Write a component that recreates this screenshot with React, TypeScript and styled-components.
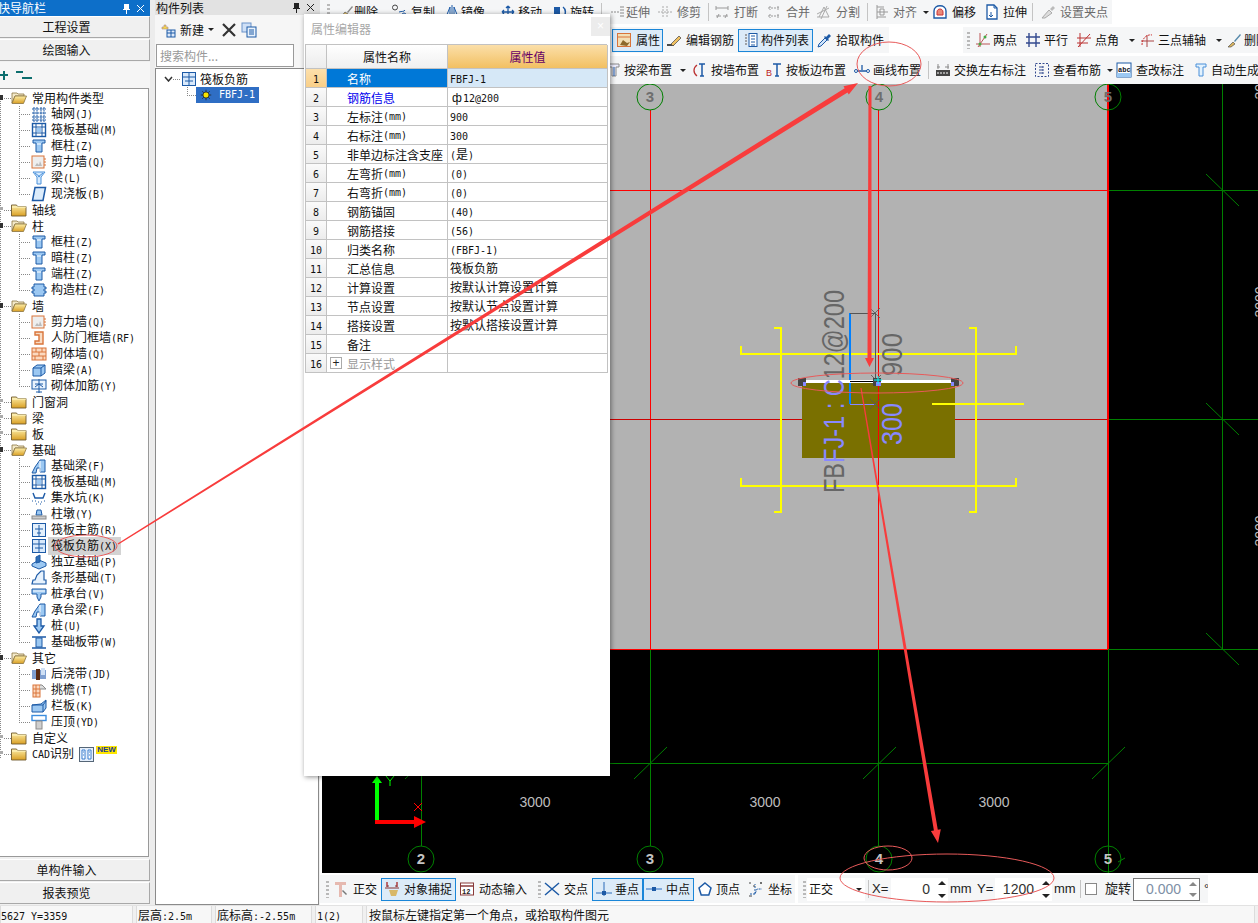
import React from "react";
import styled, { createGlobalStyle } from "styled-components";

const Global = createGlobalStyle`
  html, body { margin: 0; padding: 0; background: #f0f0f0; }
  body { font-family: "Noto Sans CJK SC", "Liberation Sans", sans-serif; font-size: 12px; line-height: 16px; color: #111; }
  * { box-sizing: border-box; }
`;

const Root = styled.div`position: relative; width: 1258px; height: 923px; overflow: hidden; display: flex; flex-direction: column; background: #f0f0f0;`;
const Workspace = styled.div`display: flex; height: 905px; flex: none;`;

/* --- shared text --- */
const Lat = styled.span`font-family: "DejaVu Sans Mono", "Liberation Mono", monospace; font-size: 10px; letter-spacing: 0;`;
const Txt = ({ s }: { s: string }) => (
  <>
    {s.split(/([\x21-\x7e ]+)/).map((p, i) => (p === "" ? null : /^[\x21-\x7e ]+$/.test(p) ? <Lat key={i}>{p}</Lat> : <span key={i}>{p}</span>))}
  </>
);

/* --- icons --- */
const Svg = styled.svg`width: 16px; height: 16px; flex: none; display: block;`;
const SmallSvg = styled(Svg)`width: 12px; height: 12px;`;
const B = "#1d5aa6", L = "#9cc8f2", O = "#d9743a", G = "#8a8a8a", D = "#444";
const col = <><path d="M2 2h12v3H11v9H5V5H2z" fill={L} stroke={B} /><path d="M6 6h4" stroke="#fff" /></>;
const fbeam = <><path d="M1 15l3-6 5-7h5v12H9v-4H6l-1 5z" fill={L} stroke={B} /><path d="M9 3v11" stroke="#fff" /></>;
const raft = <><rect x="1.5" y="1.5" width="13" height="13" fill="#fff" stroke={B} strokeWidth="1.4" /><path d="M1 5h14M1 11h14M5 1v14M11 1v14" stroke={B} /><rect x="6" y="6" width="4" height="4" fill={L} /></>;
const wall = <><rect x="1" y="2" width="12" height="12" fill="#eee" stroke={O} /><path d="M4 12l2-3 2 2 1-4 2 5z" fill="#bbb" /><path d="M13 5h2M13 8h2M13 11h2" stroke={O} /></>;
const icons = {
  grid: <path d="M1 3h14M1 7h14M1 11h14M1 14h14M3 1v15M6 1v15M10 1v15M13 1v15" stroke={B} strokeDasharray="2 .6" fill="none" />,
  raft, col, wall,
  beam: <><path d="M2 2h12l-4 5v7H6V7z" fill="#d6ebff" stroke="#4a90d9" /><path d="M4 3l5 4M12 3L7 7" stroke="#4a90d9" /></>,
  slab: <path d="M4 1.5h10.5L12 14.5H1.5z" fill="#dcecfb" stroke={B} strokeWidth="1.5" />,
  gz: <path d="M3 2h10v3h2v2h-2v2h2v2h-2v3H3v-3H1V9h2V7H1V5h2z" fill={L} stroke={B} />,
  rf: <path d="M4 2h8v12H4v-3h4V5H4z" fill="#f8dcc4" stroke={O} strokeWidth="1.4" />,
  brick: <><rect x="1" y="2" width="14" height="12" fill="#fbd9bf" stroke={O} /><path d="M1 6h14M1 10h14M5 2v4M11 2v4M8 6v4M4 10v4M12 10v4" stroke={O} /></>,
  lintel: <><path d="M2 6l4-3h8v8l-4 3H2z" fill={L} stroke={B} /><path d="M2 6h8v8M10 6l4-3" stroke={B} fill="none" /></>,
  wrebar: <><rect x="1" y="2" width="14" height="9" fill="#eaf3fd" stroke={B} /><path d="M8 1v14M4 6h8M4 9l4-3 4 3M5 14h6" stroke={B} fill="none" /></>,
  fbeam,
  sump: <><path d="M2 3l2 5h8l2-5" fill="none" stroke={B} strokeWidth="1.4" /><path d="M1 11h1M4 11h1M7 12h1M10 12h1M13 11h1M5 14h1M9 14h1" stroke={B} /></>,
  pier: <><path d="M6 4h4l1 5H5z" fill={L} stroke={B} /><rect x="1" y="10" width="14" height="3" fill="#ccc" stroke={G} /></>,
  fmain: <><rect x="1.5" y="1.5" width="13" height="13" fill="#e3f0fc" stroke={B} /><path d="M8 3v11M4 7h8M6 11h4" stroke={B} fill="none" /></>,
  fneg: <><rect x="1.5" y="1.5" width="13" height="13" fill="#d9e9fb" stroke={B} /><path d="M1.5 6h13M8 2v12M4 10h8" stroke={B} fill="none" /></>,
  iso: <><path d="M1 10l7-4 7 3v3l-7 3-7-3z" fill={L} stroke={B} /><path d="M5 3l4-2v7l-4 1z" fill="#2d6cb4" stroke={B} /></>,
  strip: <><path d="M1 14l1-4h2l2-5 4-4h3v9h2v4z" fill="#e7f2fd" stroke={B} strokeWidth="1.2" /></>,
  cap: <><path d="M1 3h14v5H10v3l-2 4-2-4V8H1z" fill={L} stroke={B} /><path d="M2 5h12" stroke="#fff" /></>,
  pile: <><path d="M6 1h4v7h3l-5 7-5-7h3z" fill={L} stroke={B} strokeWidth="1.3" /></>,
  band: <><path d="M1 3h14M1 14h14" stroke={B} strokeWidth="1.4" /><rect x="5" y="4" width="6" height="9" fill={L} stroke={B} /></>,
  post: <><rect x="1" y="4" width="14" height="9" fill="#7f9fd0" /><rect x="5" y="3" width="4" height="11" fill="#5a2b14" /><rect x="10" y="2" width="4" height="7" fill="#cfe0f5" /></>,
  eaves: <><rect x="2" y="3" width="7" height="12" fill="#fbd9bf" stroke={O} /><path d="M2 7h7M2 11h7M5 3v12" stroke={O} /><path d="M9 3h2l4 4H9" fill="#ddd" stroke={G} /></>,
  parapet: <><path d="M1 7l9-1 5-4v8l-3 4H1z" fill={L} stroke={B} /><path d="M1 7h11v7M12 7l3-4" stroke={B} fill="none" /></>,
  cope: <><rect x="1" y="1.5" width="14" height="5" fill="#fff" stroke="#3c8dde" strokeWidth="1.4" /><rect x="5" y="7" width="6" height="8" fill="#cfcfcf" stroke={G} /></>,
  del: <><path d="M9 8l5-6 1 1-5 6z" fill="#888" /><path d="M2 14l5-6 3 2-2 3z" fill="#e3c16f" stroke={D} strokeWidth=".6" /></>,
  copy: <><circle cx="4" cy="3.5" r="2.5" fill="none" stroke={D} /><circle cx="13" cy="11" r="2" fill="none" stroke={B} /><path d="M8 8c3-1 5 0 6-2M3 11h5" stroke={B} fill="none" /></>,
  mirror: <path d="M8 1v14M6 3L2 13h4zM10 3l4 10h-4z" stroke={B} fill="#dcecfb" />,
  move: <path d="M8 2v12M2 8h12M8 2L6 4M8 2l2 2M8 14l-2-2M8 14l2-2M2 8l2-2M2 8l2 2M14 8l-2-2M14 8l-2 2" stroke={B} strokeWidth="1.3" fill="none" />,
  rotate: <><rect x="2" y="3" width="6" height="9" fill={B} /><path d="M11 3c3 2 3 7 1 10" stroke={B} strokeWidth="1.5" fill="none" /><path d="M10 12l3 2 1-3" fill={B} /></>,
  extend: <path d="M2 8h8M12 2v12M14 2v12" stroke={G} strokeDasharray="2 1" fill="none" />,
  trim: <path d="M1 8h14M6 2v12M10 2v12" stroke="#aaa" strokeDasharray="2 1" fill="none" />,
  brk: <path d="M2 4h12M2 12h5M9 12h5M2 2v4M14 2v4M3 14l2-4M11 14l2-4" stroke="#999" fill="none" />,
  merge: <path d="M2 4h12M2 12h12M4 2v4M12 2v4M4 10v4M12 10v4" stroke="#999" strokeDasharray="2 1" fill="none" />,
  split: <path d="M2 13h12L9 3 4 13M2 10l12-6M6 15l6-13" stroke="#aaa" fill="none" />,
  align: <path d="M3 1v14M3 3h7M3 8h11M3 13h9M6 5h4v6H6z" stroke="#999" fill="none" />,
  offset: <><path d="M2 14V7c0-7 12-7 12 0v7z" fill="#fff" stroke={B} strokeWidth="1.4" /><path d="M5 11V8c0-4 6-4 6 0v3z" fill="#e98a7a" stroke="#c33" /></>,
  stretch: <><path d="M3 1h7l3 3v11H3z" fill="#fff" stroke={B} strokeWidth="1.3" /><path d="M10 1v3h3M7 8v5M5 11l2 2 2-2" stroke={B} fill="none" /></>,
  gripI: <><path d="M2 14l7-8 3 3-7 5z" fill="#ddd" stroke="#aaa" /><path d="M10 5l3-3 2 2-3 3z" fill="#bbb" /></>,
  prop: <><rect x="1.5" y="1.5" width="13" height="13" fill="#f2dfb5" stroke={O} /><path d="M1 5h14" stroke={O} /><path d="M4 13l3-5 4 3 3-1-3 4z" fill="#8d6a2b" /></>,
  rebar: <><path d="M1 13h7" stroke="#111" strokeWidth="1.5" /><path d="M5 12l8-8 2 2-8 8z" fill="#f0c060" stroke={D} strokeWidth=".7" /></>,
  list: <><rect x="6" y="1.5" width="8" height="13" fill="#fff" stroke={B} /><path d="M8 4h4M8 7h4M8 10h4M8 13h4" stroke={B} /><path d="M2 3h2M2 6h2M2 9h2M2 12h2" stroke={G} strokeWidth="1.4" /></>,
  pick: <><path d="M1 15l1-3 6-6 2 2-6 6z" fill="#cfe4fb" stroke={B} /><path d="M9 7l-2-2 1-1 1 1 3-3 2 2-3 3 1 1-1 1z" fill={B} /></>,
  two: <><path d="M1 12h14M5 1v14M12 2L3 15" stroke="#b55" fill="none" /><circle cx="10" cy="5" r="1.5" fill="#4a4" /><circle cx="5" cy="12" r="1.5" fill="#4a4" /></>,
  par: <path d="M4 1v14M11 1v14M1 5h14M1 11h14" stroke="#334a8f" strokeWidth="1.4" fill="none" />,
  ang: <path d="M1 6h14M1 11h11M4 1v14M14 2L2 15" stroke="#b33" fill="none" />,
  three: <><path d="M2 9h13M8 3v12" stroke="#a44" fill="none" /><path d="M3 13c0-7 5-11 10-10" stroke="#c33" strokeDasharray="2 1" fill="none" /></>,
  del2: <><path d="M2 15l5-5 2 2-4 3z" fill="#d8b35e" stroke={D} strokeWidth=".6" /><path d="M8 9l6-7 1 1-6 7z" fill="#58a" /></>,
  bl: <><path d="M3 2h10v3H10v9H6V5H3z" fill="#eef" stroke={G} /><path d="M8 5v9" stroke={B} /></>,
  wl: <><path d="M8 2h6M11 2v12M9 14h4" stroke={B} strokeWidth="1.5" fill="none" /><path d="M6 3C2 6 2 11 6 14" stroke="#b33" strokeWidth="1.3" fill="none" /></>,
  el: <><text x="0" y="14" fontSize="9" fill="#b22" fontFamily="Liberation Sans">B</text><path d="M7 2h8M11 2v12M9 14h4" stroke={B} strokeWidth="1.5" fill="none" /></>,
  ll: <><path d="M1 9h14M8 3v5" stroke={B} strokeWidth="1.3" fill="none" /><circle cx="2" cy="9" r="1.5" fill="#fff" stroke={B} /><circle cx="14" cy="9" r="1.5" fill="#fff" stroke={B} /></>,
  swap: <><rect x="1" y="8" width="14" height="6" fill={D} /><path d="M3 10v2M6 10v2M9 10v2M12 10v2" stroke="#fff" /><path d="M2 5h3M10 5h4M3 2v5M13 2v5" stroke={G} fill="none" /></>,
  view: <><rect x="1.5" y="1.5" width="13" height="13" fill="none" stroke="#334a8f" strokeDasharray="2 1.5" /><path d="M5 5h6M5 8h6M5 11h6M8 4v8" stroke="#334a8f" strokeDasharray="2 1" /></>,
  abc: <><rect x="1" y="1" width="14" height="14" fill="#fff" stroke={B} /><rect x="1" y="11" width="14" height="4" fill={L} /><text x="2" y="10" fontSize="7" fill="#112" fontFamily="Liberation Mono" fontWeight="700">abc</text></>,
  auto: <><path d="M3 2h10v3H10v9H6V5H3z" fill="#e3f2fd" stroke="#4a90d9" /></>,
  ortho: <><path d="M2 1h11v3H9v12H6V4H2z" fill="#e6b9b0" /><path d="M10 9l4 4-1 1-4-4z" fill="#777" /></>,
  snap: <><path d="M3 1v5M13 1v5" stroke="#a33" strokeWidth="1.4" /><path d="M1 7h14M3 5h2M11 5h2" stroke="#833" /><path d="M5 9h9l-2 6H7z" fill="#d8b868" /></>,
  dyn: <><rect x="1.5" y="2" width="13" height="12" fill="#fff" stroke="#8a3a3a" /><path d="M1.5 5h13" stroke="#8a3a3a" strokeWidth="1.5" /><text x="3" y="13" fontSize="7" fontFamily="Liberation Mono" fontWeight="700" fill="#222">12</text></>,
  cross: <path d="M1 2l14 12M15 2L1 14" stroke={B} strokeWidth="1.5" fill="none" />,
  perp: <><path d="M0 12h16M8 1v14" stroke="#2a6bb8" /><rect x="6" y="10" width="4" height="4" fill={B} /></>,
  mid: <><path d="M0 8h16" stroke="#5a8fd0" strokeWidth="1.4" /><rect x="6" y="6" width="4" height="4" fill={B} /></>,
  vert: <path d="M8 2l6 5-2.2 7H4.2L2 7z" fill="#fff" stroke={B} strokeWidth="1.5" />,
  coord: <><path d="M2 13h5l2-5h5M7 13V3" stroke={B} strokeDasharray="2 1" fill="none" /><path d="M1 2h2M5 5h2M12 2h2M13 1v2M1 15h3" stroke={D} /></>,
  sun: <><circle cx="8" cy="8" r="4" fill="#f7e300" stroke="#222" /><path d="M8 1v3M8 12v3M1 8h3M12 8h3M3 3l2 2M11 11l2 2M13 3l-2 2M5 11l-2 2" stroke="#222" /></>,
  neu: <><path d="M4 3h2v2h2v2H2V5h2z" fill="#f7d84c" stroke="#a88" strokeWidth=".6" /><rect x="7" y="8" width="8" height="7" fill="#dfeafa" stroke={B} /><path d="M7 11h8M11 8v7" stroke={B} /></>,
  xx: <path d="M2 2l12 12M14 2L2 14" stroke="#333" strokeWidth="2.2" />,
  dup: <><rect x="1" y="1" width="9" height="9" fill="#cfe0f6" stroke="#6a92c8" /><rect x="6" y="5" width="9" height="10" fill="#e9f2fc" stroke={B} /><path d="M8 8h5M8 10h5M8 12h5" stroke={B} /></>,
};
type IconName = keyof typeof icons;
const Icon = ({ n }: { n: IconName }) => <Svg viewBox="0 0 16 16">{icons[n]}</Svg>;

const FolderSvg = styled.svg`width: 16px; height: 16px; flex: none; display: block;`;
const Folder = ({ open }: { open?: boolean }) => (
  <FolderSvg viewBox="0 0 16 16">
    <defs>
      <linearGradient id="fg" x1="0" y1="0" x2="0" y2="1">
        <stop offset="0" stopColor="#fdeea8" />
        <stop offset="1" stopColor="#d99f24" />
      </linearGradient>
    </defs>
    {open ? (
      <>
        <path d="M1 3h5l1 1h6v2H4L1 13z" fill="#f3e9c9" stroke="#8a7340" strokeWidth=".8" />
        <path d="M4 6h11.5L12.5 13.5H1z" fill="url(#fg)" stroke="#8a7340" strokeWidth=".8" />
      </>
    ) : (
      <>
        <path d="M.5 3h5l1 1.5h8.5V14H.5z" fill="url(#fg)" stroke="#6f5a2e" strokeWidth=".9" />
        <path d="M1 5h14" stroke="#fff7c8" />
      </>
    )}
  </FolderSvg>
);

/* --- left navigation --- */
const NavPanel = styled.div`width: 150px; flex: none; display: flex; flex-direction: column;`;
const NavHead = styled.div`height: 16px; flex: none; background: #0d6fc9; color: #fff; display: flex; align-items: center; font-size: 12px; overflow: hidden;`;
const HeadTitle = styled.span`flex: 1; white-space: nowrap;`;
const NavTitle = styled(HeadTitle)`margin-left: -2px;`;
const PinGlyph = styled.svg`width: 9px; height: 11px; flex: none;`;
const Pin = ({ c }: { c: string }) => (
  <PinGlyph viewBox="0 0 9 11"><path d="M2 1h5v5h1v1H5v4H4V7H1V6h1z" fill={c} /></PinGlyph>
);
const CloseGlyph = styled.svg<{ $mx: number }>`width: 9px; height: 9px; flex: none; margin: 0 ${p => p.$mx}px 0 ${p => p.$mx}px;`;
const Close = ({ c, mx }: { c: string; mx: number }) => (
  <CloseGlyph $mx={mx} viewBox="0 0 9 9"><path d="M1 1l7 7M8 1L1 8" stroke={c} fill="none" /></CloseGlyph>
);
const NavBtn = styled.div`height: 22px; flex: none; margin-bottom: 1px; background: #f0f0f0; border-bottom: 1px solid #a8a8a8; border-right: 1px solid #a8a8a8; border-top: 1px solid #fff; text-align: center; line-height: 20px; padding-right: 16px;`;
const NavTools = styled.div`height: 26px; flex: none; background: #f5f5f5; display: flex; align-items: center; gap: 8px;`;
const PlusMark = styled.svg`width: 8px; height: 9px; flex: none;`;
const MinusMark = styled.svg`width: 16px; height: 9px; flex: none;`;
const NavTree = styled.div`flex: 1; min-height: 0; margin-right: 1px; background-color: #fff; border-top: 1px solid #999; border-right: 1px solid #999; border-bottom: 1px solid #999; padding-top: 1px;
  background-image: repeating-linear-gradient(to bottom, #888 0 1px, transparent 1px 2px); background-size: 1px 660px; background-repeat: no-repeat; background-position: 0 10px;`;
const TreeRow = styled.div`height: 16px; display: flex; align-items: center; white-space: nowrap;`;
const RootRow = styled(TreeRow)`padding-left: 0;`;
const Expander = styled.span<{ $open?: boolean }>`width: 11px; height: 16px; flex: none; display: block;
  background-image: linear-gradient(${p => (p.$open ? "#333,#333" : "#aaa,#aaa")}), repeating-linear-gradient(to right, #888 0 1px, transparent 1px 2px);
  background-size: 3px ${p => (p.$open ? "5px" : "3px")}, 7px 1px; background-position: 0 5px, 4px 8px; background-repeat: no-repeat;`;
const FolderLabel = styled.span`margin-left: 5px;`;
const ChildRow = styled(TreeRow)`padding-left: 19px;`;
const Conn = styled.span<{ $last?: boolean }>`width: 12px; height: 16px; flex: none; display: block;
  background-image: repeating-linear-gradient(to bottom, #888 0 1px, transparent 1px 2px), repeating-linear-gradient(to right, #888 0 1px, transparent 1px 2px);
  background-size: 1px ${p => (p.$last ? "9px" : "16px")}, 11px 1px; background-position: 0 0, 0 8px; background-repeat: no-repeat;`;
const ChildLabel = styled.span<{ $hl?: boolean }>`margin-left: ${p => (p.$hl ? "1px" : "4px")}; padding-left: ${p => (p.$hl ? "3px" : "0")}; padding-right: ${p => (p.$hl ? "4px" : "0")}; background: ${p => (p.$hl ? "#d3d3d3" : "transparent")};`;
const CadIconBox = styled.svg`width: 15px; height: 15px; margin-left: 5px; flex: none;`;
const NewBadge = styled.span`height: 8px; width: 21px; margin-top: -8px; margin-left: 2px; background: #ffe600; color: #1a3a9a; font: 700 8px/8px "Liberation Sans", sans-serif; text-align: center; flex: none;`;
const NavBottom = styled.div`flex: none; padding-top: 2px; height: 48px;`;

type Node = { f: string; open?: boolean; kids?: [string, IconName][]; extra?: boolean };
const tree: Node[] = [
  { f: "常用构件类型", open: true, kids: [["轴网(J)", "grid"], ["筏板基础(M)", "raft"], ["框柱(Z)", "col"], ["剪力墙(Q)", "wall"], ["梁(L)", "beam"], ["现浇板(B)", "slab"]] },
  { f: "轴线" },
  { f: "柱", open: true, kids: [["框柱(Z)", "col"], ["暗柱(Z)", "col"], ["端柱(Z)", "col"], ["构造柱(Z)", "gz"]] },
  { f: "墙", open: true, kids: [["剪力墙(Q)", "wall"], ["人防门框墙(RF)", "rf"], ["砌体墙(Q)", "brick"], ["暗梁(A)", "lintel"], ["砌体加筋(Y)", "wrebar"]] },
  { f: "门窗洞" },
  { f: "梁" },
  { f: "板" },
  { f: "基础", open: true, kids: [["基础梁(F)", "fbeam"], ["筏板基础(M)", "raft"], ["集水坑(K)", "sump"], ["柱墩(Y)", "pier"], ["筏板主筋(R)", "fmain"], ["筏板负筋(X)", "fneg"], ["独立基础(P)", "iso"], ["条形基础(T)", "strip"], ["桩承台(V)", "cap"], ["承台梁(F)", "fbeam"], ["桩(U)", "pile"], ["基础板带(W)", "band"]] },
  { f: "其它", open: true, kids: [["后浇带(JD)", "post"], ["挑檐(T)", "eaves"], ["栏板(K)", "parapet"], ["压顶(YD)", "cope"]] },
  { f: "自定义" },
  { f: "CAD识别", extra: true },
];

/* --- component list --- */
const Divider = styled.div`width: 5px; flex: none; background: #ececec;`;
const ListPanel = styled.div`width: 165px; flex: none; display: flex; flex-direction: column;`;
const ListHead = styled.div`height: 15px; flex: none; background: #e2e2e2; display: flex; align-items: center; padding-left: 1px; overflow: hidden;`;
const ListTools = styled.div`height: 29px; flex: none; background: #f6f6f6; display: flex; align-items: center; padding-left: 5px;`;
const ListTool = styled.span<{ $w: number }>`width: ${p => p.$w}px; flex: none; display: flex; align-items: center; gap: 4px;`;
const SearchRow = styled.div`height: 24px; flex: none; background: #f6f6f6; display: flex;`;
const SearchBox = styled.div`width: 138px; height: 23px; margin-left: 1px; background: #fff; border: 1px solid #9a9a9a; color: #999; line-height: 21px; padding-left: 3px;`;
const ListTree = styled.div`flex: 1; min-height: 0; width: 164px; background: #fff; border: 1px solid #8a8a8a; padding: 2px 0 0 8px;`;
const ListRootRow = styled(TreeRow)`gap: 0;`;
const Chevron = styled.svg`width: 9px; height: 6px; flex: none;`;
const RootDots = styled.span`width: 8px; height: 1px; flex: none; background: repeating-linear-gradient(to right, #888 0 1px, transparent 1px 2px);`;
const ListRootLabel = styled.span`margin-left: 3px;`;
const ListChild = styled(TreeRow)`padding-left: 23px;`;
const ListConn = styled(Conn)`width: 9px;`;
const Selected = styled.span`display: flex; align-items: center; height: 16px; width: 63px; padding-left: 4px; gap: 7px; background: #2f6ec4; color: #fff;`;
const SunBox = styled.span`width: 12px; height: 12px; flex: none; display: block;`;
const Caret = styled.span`width: 0; height: 0; flex: none; border-left: 3px solid transparent; border-right: 3px solid transparent; border-top: 3px solid #222;`;

/* --- main area --- */
const MainCol = styled.div`flex: 1; min-width: 0; display: flex; flex-direction: column; background: #fff;`;
const Ribbons = styled.div`height: 84px; flex: none; display: flex; flex-direction: column; background: #fff;`;
const RibbonLine = styled.div<{ $h: number; $mt: number }>`height: ${p => p.$h}px; margin-top: ${p => p.$mt}px; display: flex; flex: none;`;
const Band = styled.div<{ $w: number; $pl: number; $ml?: number }>`width: ${p => p.$w}px; margin-left: ${p => p.$ml || 0}px; padding-left: ${p => p.$pl}px; height: 100%; flex: none; display: flex; align-items: center; background: #f5f6f7; overflow: hidden; white-space: nowrap;`;
const Grip = styled.span<{ $mr: number }>`width: 3px; height: 17px; flex: none; margin-right: ${p => p.$mr}px; background: repeating-linear-gradient(to bottom, #b9b9b9 0 2px, transparent 2px 4px);`;
const Sep = styled.span<{ $mr: number }>`width: 1px; height: 18px; flex: none; margin-right: ${p => p.$mr}px; background: #c4c4c4;`;
const Tool = styled.div<{ $w: number; $mr: number; $pl: number; $gap: number; $on?: boolean; $dim?: boolean }>`
  width: ${p => p.$w}px; height: 23px; flex: none; margin-right: ${p => p.$mr}px; padding-left: ${p => p.$pl}px;
  display: flex; align-items: center; gap: ${p => p.$gap}px; overflow: hidden;
  color: ${p => (p.$dim ? "#6a6a6a" : "#111")};
  opacity: 1;
  border: ${p => (p.$on ? "1px solid #1a86d8" : "none")};
  background: ${p => (p.$on ? "#dcebf8" : "transparent")};
`;
const ToolCaret = styled(Caret)<{ $ml: number }>`margin-left: ${p => p.$ml}px;`;

type Item = { x: number; t?: string; i?: IconName; ix?: number; tx?: number; caret?: number; on?: boolean; end?: number; dim?: boolean; k?: "sep" | "grip" };

const Tools = ({ items, end }: { items: Item[]; end: number }) => (
  <>
    {items.map((it, idx) => {
      const next = idx + 1 < items.length ? items[idx + 1].x : end;
      if (it.k === "grip") return <Grip key={idx} $mr={next - it.x - 3} />;
      if (it.k === "sep") return <Sep key={idx} $mr={next - it.x - 1} />;
      const right = it.end ?? next;
      const ix = it.ix ?? it.x;
      const bw = it.on ? 1 : 0;
      return (
        <Tool key={idx} $w={right - it.x} $mr={next - right} $pl={ix - it.x - bw} $gap={(it.tx ?? ix + 16) - ix - 16} $on={it.on} $dim={it.dim}>
          {it.i && <Icon n={it.i} />}
          <span>{it.t}</span>
          {it.caret !== undefined && <ToolCaret $ml={it.caret} />}
        </Tool>
      );
    })}
  </>
);

const row1: Item[] = [
  { x: 327, k: "grip" },
  { x: 338, i: "del", t: "删除", tx: 353 },
  { x: 391, i: "copy", t: "复制", tx: 411 },
  { x: 444, i: "mirror", t: "镜像", tx: 461 },
  { x: 500, i: "move", t: "移动", tx: 518 },
  { x: 552, i: "rotate", t: "旋转", tx: 570 },
  { x: 601, k: "sep" },
  { x: 609, i: "extend", t: "延伸", tx: 626, dim: true },
  { x: 657, i: "trim", t: "修剪", tx: 677, dim: true },
  { x: 708, k: "sep" },
  { x: 714, i: "brk", t: "打断", tx: 734, dim: true },
  { x: 766, i: "merge", t: "合并", tx: 786, dim: true },
  { x: 815, i: "split", t: "分割", tx: 836, dim: true },
  { x: 867, k: "sep" },
  { x: 874, i: "align", t: "对齐", tx: 893, dim: true, caret: 3 },
  { x: 932, i: "offset", t: "偏移", tx: 952 },
  { x: 984, i: "stretch", t: "拉伸", tx: 1003 },
  { x: 1032, k: "sep" },
  { x: 1040, i: "gripI", t: "设置夹点", tx: 1060, dim: true },
];
const row2a: Item[] = [
  { x: 612, ix: 616, i: "prop", t: "属性", tx: 636, on: true, end: 663 },
  { x: 666, i: "rebar", t: "编辑钢筋", tx: 686 },
  { x: 738, ix: 743, i: "list", t: "构件列表", tx: 761, on: true, end: 813 },
  { x: 817, i: "pick", t: "拾取构件", tx: 836 },
];
const row2b: Item[] = [
  { x: 967, k: "grip" },
  { x: 975, i: "two", t: "两点", tx: 993 },
  { x: 1025, i: "par", t: "平行", tx: 1044 },
  { x: 1076, i: "ang", t: "点角", tx: 1095, caret: 7 },
  { x: 1139, i: "three", t: "三点辅轴", tx: 1158, caret: 7 },
  { x: 1226, i: "del2", t: "删除", tx: 1244 },
];
const row3: Item[] = [
  { x: 606, i: "bl", t: "按梁布置", tx: 624, caret: 6 },
  { x: 691, i: "wl", t: "按墙布置", tx: 711 },
  { x: 766, i: "el", t: "按板边布置", tx: 786 },
  { x: 854, i: "ll", t: "画线布置", tx: 873 },
  { x: 928, k: "sep" },
  { x: 935, i: "swap", t: "交换左右标注", tx: 954 },
  { x: 1034, i: "view", t: "查看布筋", tx: 1053, caret: 3 },
  { x: 1116, i: "abc", t: "查改标注", tx: 1136 },
  { x: 1193, i: "auto", t: "自动生成", tx: 1211 },
];
const bot1: Item[] = [
  { x: 326, k: "grip" },
  { x: 333, i: "ortho", t: "正交", tx: 353 },
  { x: 381, ix: 384, i: "snap", t: "对象捕捉", tx: 404, on: true, end: 456 },
  { x: 459, i: "dyn", t: "动态输入", tx: 479 },
  { x: 538, k: "grip" },
  { x: 544, i: "cross", t: "交点", tx: 564 },
  { x: 592, ix: 596, i: "perp", t: "垂点", tx: 615, on: true, end: 643 },
  { x: 643, ix: 646, i: "mid", t: "中点", tx: 666, on: true, end: 694 },
  { x: 697, i: "vert", t: "顶点", tx: 716 },
  { x: 748, i: "coord", t: "坐标", tx: 768 },
];

/* --- canvas --- */
const Canvas = styled.div`height: 789px; flex: none; padding-left: 2px; background: #fff;`;
const CanvasSvg = styled.svg`display: block; width: 936px; height: 789px; background: #000;`;

const green = "#008000";
const Axis = ({ x, n }: { x: number; n: string }) => (
  <>
    <circle cx={x} cy={97} r={13} fill="none" stroke={green} />
    <text x={x} y={102} textAnchor="middle" fontSize="15" fill="#6e6e6e" fontWeight="700" fontFamily="Liberation Sans">{n}</text>
    <circle cx={x} cy={859} r={13} fill="none" stroke={green} />
    <text x={x} y={864} textAnchor="middle" fontSize="15" fill="#c4c4c4" fontWeight="700" fontFamily="Liberation Sans">{n}</text>
  </>
);
const Tick = ({ x, y, up }: { x: number; y: number; up?: boolean }) =>
  up ? <path d={`M${x - 16} ${y + 16}L${x + 17} ${y - 16}`} stroke={green} /> : <path d={`M${x - 16} ${y - 16}L${x + 17} ${y + 16}`} stroke={green} />;

const CadDrawing = () => (
  <CanvasSvg viewBox="322 84 936 789">
    <rect x="322" y="84" width="786" height="565" fill="#b2b2b2" />
    <g stroke={green} fill="none">
      <path d="M421.5 649V846M650.5 649V846M878.5 649V846M1108.5 649V873" />
      <path d="M322 763.5H1108M1108 190.5H1258M1108 419.5H1258M1108 649.5H1258M1222.5 84V649" />
    </g>
    <Tick x={421} y={763} up />
    <Tick x={650} y={763} up />
    <Tick x={879} y={763} up />
    <Tick x={1108} y={763} up />
    <Tick x={1222} y={190} />
    <Tick x={1222} y={419} />
    <Tick x={1222} y={649} />
    <path d="M1118 862l7-4" stroke={green} fill="none" />
    <g stroke="#ff0000" fill="none">
      <path d="M322 190.5H1108M650.5 110V649M878.5 110V649M322 649.5H1108" />
      <path d="M322 419.5H1108" stroke="#cc0000" />
      <path d="M1108 84V649" strokeWidth="2" />
    </g>
    <Axis x={421} n="2" />
    <Axis x={650} n="3" />
    <Axis x={879} n="4" />
    <Axis x={1108} n="5" />
    <rect x="802" y="382" width="153" height="76" fill="#7a7000" />
    <path d="M878.5 382V458" stroke="#ff0000" />
    <g stroke="#ffff00" strokeWidth="2" fill="none">
      <path d="M741 346V354H1016V346M741 478V486H1016V478" />
      <path d="M774 328H781V512H774M969 328H976V512H969" />
      <path d="M932 404H1024" />
    </g>
    <path d="M850 313V404" stroke="#0080ff" strokeWidth="2" />
    <path d="M850 313.5H875.5V378" stroke="#555" fill="none" />
    <path d="M850 404.5H876" stroke="#8888ff" />
    <path d="M870 308l10 10M870 318l10-10M870 399l10 10M870 409l10-10M871 375l10 10M871 385l10-10" stroke="#555" strokeWidth=".8" />
    <path d="M798 381.5H959" stroke="#fff" strokeWidth="3" />
    <path d="M850 381.5H875" stroke="#000" />
    <rect x="798" y="378" width="8" height="8" fill="#444" />
    <rect x="873" y="378" width="8" height="8" fill="#444" />
    <rect x="951" y="378" width="8" height="8" fill="#444" />
    <rect x="803" y="382" width="3" height="4" fill="#8888ff" />
    <rect x="951" y="382" width="3" height="4" fill="#8888ff" />
    <rect x="876" y="382" width="5" height="4" fill="#8888ff" />
    <path d="M874 380h8M878 376v8" stroke="#0ff" />
    <text transform="translate(844 493) rotate(-90)" fontSize="29" fontFamily="Liberation Sans" textLength="203" lengthAdjust="spacingAndGlyphs" fill="#666">
      <tspan>FB</tspan><tspan fill="#8888ff">FJ-1 : C</tspan><tspan>12@200</tspan>
    </text>
    <text transform="translate(902 376) rotate(-90)" fontSize="29" fontFamily="Liberation Sans" textLength="43" lengthAdjust="spacingAndGlyphs" fill="#666">900</text>
    <text transform="translate(902 445) rotate(-90)" fontSize="29" fontFamily="Liberation Sans" textLength="42" lengthAdjust="spacingAndGlyphs" fill="#8888ff">300</text>
    <g fontSize="14" fontFamily="Liberation Sans" fill="#bdbdbd" textAnchor="middle">
      <text x="535" y="807">3000</text>
      <text x="765" y="807">3000</text>
      <text x="994" y="807">3000</text>
      <text transform="translate(1265 302) rotate(-90)">3000</text>
      <text transform="translate(1265 531) rotate(-90)">3000</text>
      <text transform="translate(1265 84) rotate(-90)">3000</text>
    </g>
    <path d="M377 822V782" stroke="#00ff00" strokeWidth="4" />
    <path d="M372 783l5-7 5 7z" fill="#00ff00" />
    <path d="M375 822H416" stroke="#ff0000" strokeWidth="4" />
    <path d="M414 816l12 6-12 6z" fill="#ff0000" />
    <path d="M386 776l4 5 4-5M390 781v5" stroke="#00ff00" fill="none" />
    <path d="M414 803l8 8M422 803l-8 8" stroke="#ff0000" />
  </CanvasSvg>
);

/* --- bottom bar --- */
const BottomBar = styled.div`height: 32px; flex: none; display: flex; background: #fff; padding-top: 2px;`;
const BottomBand = styled(Band)`height: 28px;`;
const Plain = styled.span<{ $w: number; $c?: string }>`width: ${p => p.$w}px; flex: none; font: 13px/16px "Liberation Sans", "Noto Sans CJK SC", sans-serif; color: ${p => p.$c || "#222"};`;
const SelectBox = styled.div`width: 58px; height: 23px; flex: none; background: #fff; display: flex; align-items: center; padding-left: 2px; justify-content: space-between; padding-right: 3px;`;
const NumField = styled.div`width: 57px; height: 23px; flex: none; background: #fff; display: flex; align-items: center; justify-content: flex-end; font: 14px/16px "Liberation Sans", sans-serif; color: #333;`;
const RotField = styled(NumField)`width: 67px; border: 1px solid #777; color: #7e8fa6;`;
const Spin = styled.span`width: 13px; height: 100%; margin-left: 5px; flex: none; display: flex; flex-direction: column; align-items: center; justify-content: space-between; padding: 3px 0;`;
const Up = styled.span<{ $c?: string }>`width: 0; height: 0; border-left: 4px solid transparent; border-right: 4px solid transparent; border-bottom: 4px solid ${p => p.$c || "#222"};`;
const Down = styled.span<{ $c?: string }>`width: 0; height: 0; border-left: 4px solid transparent; border-right: 4px solid transparent; border-top: 4px solid ${p => p.$c || "#222"};`;
const Check = styled.span`width: 12px; height: 12px; flex: none; background: #fff; border: 1px solid #888; margin: 0 8px 0 4px;`;
const Gap = styled.span<{ $w: number }>`width: ${p => p.$w}px; flex: none;`;

/* --- status --- */
const Status = styled.div`height: 18px; flex: none; display: flex; background: #f0f0f0; overflow: hidden; border-top: 1px solid #e2e2e2;`;
const StatusCell = styled.div<{ $w: number; $pl: number; $grow?: boolean }>`width: ${p => p.$w}px; flex: ${p => (p.$grow ? 1 : "none")}; margin-right: 3px; height: 17px; line-height: 17px; padding-left: ${p => p.$pl}px; background: #f7f7f7; border-left: 1px solid #dcdcdc; border-right: 1px solid #dcdcdc; white-space: nowrap;`;

/* --- property editor --- */
const Dialog = styled.div`position: absolute; left: 304px; top: 14px; width: 306px; height: 762px; background: #fff; box-shadow: 1px 1px 5px rgba(0, 0, 0, .45); padding-left: 1px;`;
const DlgHead = styled.div`height: 30px; display: flex; align-items: center; justify-content: space-between; padding-left: 6px;`;
const DlgTitle = styled.span`color: #a8a8a8;`;
const DlgClose = styled.span`width: 19px; height: 19px; background: #ececec; color: #fff; display: flex; align-items: center; justify-content: center; margin-top: -6px; font: 12px "Liberation Sans", sans-serif;`;
const Table = styled.div`display: grid; grid-template-columns: 21px 121px 160px; grid-template-rows: 24px; grid-auto-rows: 19px; width: 302px; border-left: 1px solid #c2c2c2; border-top: 1px solid #c2c2c2;`;
const Cell = styled.div`border-right: 1px solid #c2c2c2; border-bottom: 1px solid #c2c2c2; line-height: 17px; white-space: nowrap; overflow: hidden;`;
const HeadCorner = styled(Cell)`background: linear-gradient(#fafafa, #ececec);`;
const HeadName = styled(Cell)`background: linear-gradient(#fff, #f0f0f0); text-align: center; line-height: 23px;`;
const HeadValue = styled(Cell)`background: linear-gradient(#fbdfa9, #f2c062); text-align: center; color: #660066; line-height: 23px;`;
const NumCell = styled(Cell)<{ $sel?: boolean }>`text-align: center; background: ${p => (p.$sel ? "linear-gradient(#fde0ac,#f9cf88)" : "linear-gradient(#fafafa,#ececec)")};`;
const NameCell = styled(Cell)<{ $sel?: boolean; $c?: string; $pl?: number }>`padding-left: ${p => p.$pl ?? 20}px; display: flex; align-items: center; background: ${p => (p.$sel ? "#0078d7" : "#fff")}; color: ${p => (p.$sel ? "#fff" : p.$c || "#111")};`;
const ValueCell = styled(Cell)<{ $sel?: boolean }>`padding-left: 2px; background: ${p => (p.$sel ? "#d6e8f7" : "#fff")};`;
const PlusBox = styled.span`width: 12px; height: 12px; border: 1px solid #aaa; margin-right: 5px; flex: none; color: #222; font: 12px/10px "Liberation Sans", sans-serif; text-align: center;`;
const RebarSym = styled.span`display: inline-block; width: 12px; text-align: center; margin-left: 1px; font-family: "Liberation Sans", sans-serif;`;

const props: [string, string, string?][] = [
  ["名称", "FBFJ-1"],
  ["钢筋信息", "12@200", "#0000ee"],
  ["左标注(mm)", "900"],
  ["右标注(mm)", "300"],
  ["非单边标注含支座", "(是)"],
  ["左弯折(mm)", "(0)"],
  ["右弯折(mm)", "(0)"],
  ["钢筋锚固", "(40)"],
  ["钢筋搭接", "(56)"],
  ["归类名称", "(FBFJ-1)"],
  ["汇总信息", "筏板负筋"],
  ["计算设置", "按默认计算设置计算"],
  ["节点设置", "按默认节点设置计算"],
  ["搭接设置", "按默认搭接设置计算"],
  ["备注", ""],
  ["显示样式", "", "#999"],
];

/* --- red annotations --- */
const Overlay = styled.svg`position: absolute; left: 0; top: 0; width: 1258px; height: 923px; pointer-events: none;`;
const arrowPts = (x1: number, y1: number, x2: number, y2: number, w1: number, w2: number, hw: number, hl: number) => {
  const dx = x2 - x1, dy = y2 - y1, len = Math.hypot(dx, dy);
  const ux = dx / len, uy = dy / len, nx = -uy, ny = ux;
  const bx = x2 - ux * hl, by = y2 - uy * hl;
  const p = (x: number, y: number, k: number) => `${(x + nx * k).toFixed(1)},${(y + ny * k).toFixed(1)}`;
  return [p(x1, y1, w1), p(bx, by, w2), p(bx, by, hw), p(x2, y2, 0), p(bx, by, -hw), p(bx, by, -w2), p(x1, y1, -w1)].join(" ");
};
const arrowRed = "#f83c3c";

export default function App() {
  return (
    <Root>
      <Global />
      <Workspace>
        <NavPanel>
          <NavHead>
            <NavTitle>快导航栏</NavTitle>
            <Pin c="#fff" />
            <Close c="#fff" mx={5} />
          </NavHead>
          <NavBtn>工程设置</NavBtn>
          <NavBtn>绘图输入</NavBtn>
          <NavTools>
            <PlusMark viewBox="0 0 8 9"><path d="M3 0h2v3h3v2H5v4H3V5H0V3h3z" fill="#0d6e6e" /></PlusMark>
            <MinusMark viewBox="0 0 16 9"><path d="M0 0h7v2H0zM6 6h10v2H6z" fill="#0d6e6e" /></MinusMark>
          </NavTools>
          <NavTree>
            {tree.map(n => (
              <React.Fragment key={n.f}>
                <RootRow>
                  <Expander $open={n.open} />
                  <Folder open={n.open} />
                  <FolderLabel><Txt s={n.f} /></FolderLabel>
                  {n.extra && (
                    <>
                      <CadIconBox viewBox="0 0 15 15">
                        <rect x=".5" y=".5" width="14" height="14" fill="#e4eefb" stroke="#567" />
                        <path d="M3 3h3v9H3zM9 3h3v9H9z" fill="#fff" stroke="#3a7fd0" />
                        <path d="M4 5h1M4 8h1M10 5h1M10 8h1" stroke="#3a7fd0" />
                      </CadIconBox>
                      <NewBadge>NEW</NewBadge>
                    </>
                  )}
                </RootRow>
                {n.kids?.map((k, i) => (
                  <ChildRow key={k[0] + i}>
                    <Conn $last={i === n.kids!.length - 1} />
                    <Icon n={k[1]} />
                    <ChildLabel $hl={k[0] === "筏板负筋(X)"}><Txt s={k[0]} /></ChildLabel>
                  </ChildRow>
                ))}
              </React.Fragment>
            ))}
          </NavTree>
          <NavBottom>
            <NavBtn>单构件输入</NavBtn>
            <NavBtn>报表预览</NavBtn>
          </NavBottom>
        </NavPanel>
        <Divider />
        <ListPanel>
          <ListHead>
            <HeadTitle>构件列表</HeadTitle>
            <Pin c="#222" />
            <Close c="#222" mx={5} />
          </ListHead>
          <ListTools>
            <ListTool $w={61}><Icon n="neu" />新建<Caret /></ListTool>
            <ListTool $w={20}><Svg viewBox="0 0 16 16">{icons.xx}</Svg></ListTool>
            <ListTool $w={18}><Icon n="dup" /></ListTool>
          </ListTools>
          <SearchRow>
            <SearchBox>搜索构件...</SearchBox>
          </SearchRow>
          <ListTree>
            <ListRootRow>
              <Chevron viewBox="0 0 9 6"><path d="M1 1l3.5 4L8 1" stroke="#333" strokeWidth="1.5" fill="none" /></Chevron>
              <RootDots />
              <Icon n="fneg" />
              <ListRootLabel>筏板负筋</ListRootLabel>
            </ListRootRow>
            <ListChild>
              <ListConn $last />
              <Selected>
                <SunBox><SmallSvg viewBox="0 0 16 16">{icons.sun}</SmallSvg></SunBox>
                <Lat>FBFJ-1</Lat>
              </Selected>
            </ListChild>
          </ListTree>
        </ListPanel>
        <MainCol>
          <Ribbons>
            <RibbonLine $h={24} $mt={0}>
              <Band $w={792} $pl={7}><Tools items={row1} end={1112} /></Band>
            </RibbonLine>
            <RibbonLine $h={26} $mt={3}>
              <Band $w={569} $pl={292}><Tools items={row2a} end={889} /></Band>
              <Band $w={295} $pl={4} $ml={74}><Tools items={row2b} end={1258} /></Band>
            </RibbonLine>
            <RibbonLine $h={28} $mt={3}>
              <Band $w={938} $pl={286}><Tools items={row3} end={1258} /></Band>
            </RibbonLine>
          </Ribbons>
          <Canvas><CadDrawing /></Canvas>
          <BottomBar>
            <BottomBand $w={475} $pl={6}><Tools items={bot1} end={795} /></BottomBand>
            <BottomBand $w={410} $pl={5} $ml={3}>
              <Grip $mr={1} />
              <SelectBox>正交<Caret /></SelectBox>
              <Gap $w={3} />
              <Sep $mr={3} />
              <Plain $w={19}>X=</Plain>
              <NumField>0<Spin><Up /><Down /></Spin></NumField>
              <Gap $w={2} />
              <Plain $w={27}>mm</Plain>
              <Plain $w={18}>Y=</Plain>
              <NumField>1200<Spin><Up /><Down /></Spin></NumField>
              <Gap $w={2} />
              <Plain $w={26}>mm</Plain>
              <Sep $mr={0} />
              <Check />
              <Plain $w={28}>旋转</Plain>
              <RotField>0.000<Spin><Up $c="#888" /><Down $c="#888" /></Spin></RotField>
              <Gap $w={4} />
              <Plain $w={8}>°</Plain>
            </BottomBand>
          </BottomBar>
        </MainCol>
      </Workspace>
      <Status>
        <StatusCell $w={133} $pl={0}><Lat>5627 Y=3359</Lat></StatusCell>
        <StatusCell $w={76} $pl={1}><Txt s="层高:2.5m" /></StatusCell>
        <StatusCell $w={97} $pl={1}><Txt s="底标高:-2.55m" /></StatusCell>
        <StatusCell $w={48} $pl={1}><Txt s="1(2)" /></StatusCell>
        <StatusCell $w={894} $pl={2} $grow><Txt s="按鼠标左键指定第一个角点，或拾取构件图元" /></StatusCell>
      </Status>

      <Dialog>
        <DlgHead>
          <DlgTitle>属性编辑器</DlgTitle>
          <DlgClose>×</DlgClose>
        </DlgHead>
        <Table>
          <HeadCorner />
          <HeadName>属性名称</HeadName>
          <HeadValue>属性值</HeadValue>
          {props.map((r, i) => (
            <React.Fragment key={r[0]}>
              <NumCell $sel={i === 0}><Lat>{i + 1}</Lat></NumCell>
              <NameCell $sel={i === 0} $c={r[2]} $pl={i === 15 ? 3 : 20}>
                {i === 15 && <PlusBox>+</PlusBox>}
                <Txt s={r[0]} />
              </NameCell>
              <ValueCell $sel={i === 0}>
                {i === 1 && <RebarSym>ф</RebarSym>}
                <Txt s={r[1]} />
              </ValueCell>
            </React.Fragment>
          ))}
        </Table>
      </Dialog>

      <Overlay viewBox="0 0 1258 923">
        <polygon points={arrowPts(118, 544, 858, 83, 0.7, 2.6, 5, 14)} fill={arrowRed} />
        <polygon points={arrowPts(870, 86, 869.5, 367, 1.5, 2, 4.5, 9)} fill={arrowRed} />
        <polygon points={arrowPts(861, 388, 938, 843, 0.6, 2, 5, 13)} fill={arrowRed} />
        <g fill="none" stroke="#e85a5a">
          <ellipse cx="86" cy="546" rx="31" ry="11" />
          <ellipse cx="889" cy="64" rx="32" ry="22" />
          <ellipse cx="877" cy="383" rx="86" ry="10" />
          <ellipse cx="888" cy="858" rx="24" ry="12" />
          <ellipse cx="947" cy="878" rx="107" ry="24" />
        </g>
      </Overlay>
    </Root>
  );
}
